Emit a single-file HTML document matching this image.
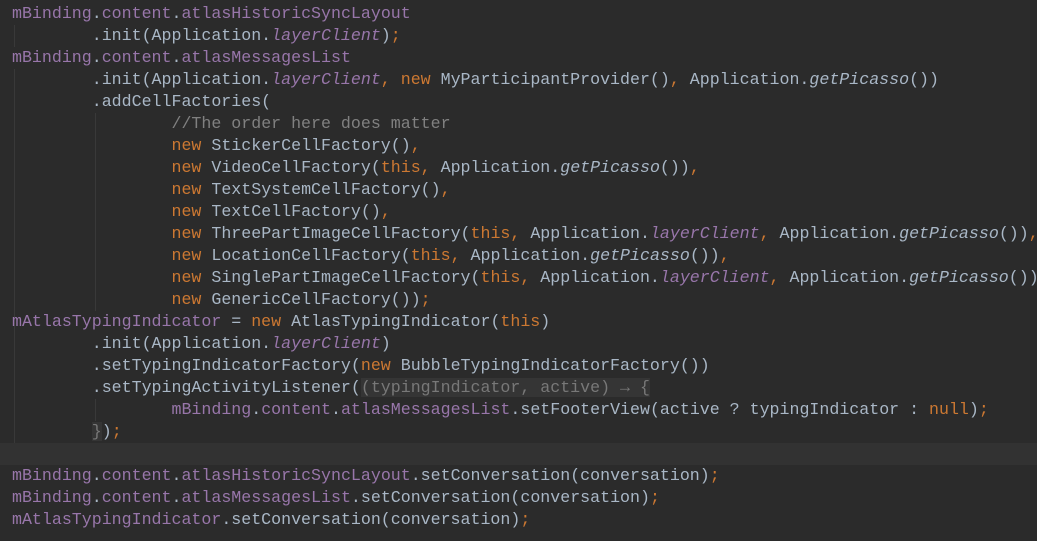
<!DOCTYPE html>
<html><head><meta charset="utf-8"><style>
html,body{margin:0;padding:0;background:#2b2b2b;width:1037px;height:541px;overflow:hidden}
#c{position:absolute;left:12px;top:3px;font-family:"Liberation Mono",monospace;font-size:16.63px;color:#a9b7c6;white-space:pre;line-height:22px}
.f{color:#9876aa}.k{color:#cc7832}.i{font-style:italic;color:#9876aa}.m{font-style:italic}.c{color:#808080}
.p{color:#787878;background:#353535}
#hl{position:absolute;left:0;top:443px;width:1037px;height:22px;background:#323232}
.g{position:absolute;width:1px;background:#393939}
</style></head><body>
<div id="hl"></div>
<div class="g" style="left:14px;top:25px;height:22px"></div>
<div class="g" style="left:14px;top:69px;height:264px"></div>
<div class="g" style="left:95px;top:113px;height:198px"></div>
<div class="g" style="left:14px;top:333px;height:110px"></div>
<div class="g" style="left:95px;top:399px;height:22px"></div>
<div id="c"><span class="f">mBinding</span>.<span class="f">content</span>.<span class="f">atlasHistoricSyncLayout</span>
        .init(Application.<span class="i">layerClient</span>)<span class="k">;</span>
<span class="f">mBinding</span>.<span class="f">content</span>.<span class="f">atlasMessagesList</span>
        .init(Application.<span class="i">layerClient</span><span class="k">, new </span>MyParticipantProvider()<span class="k">, </span>Application.<span class="m">getPicasso</span>())
        .addCellFactories(
                <span class="c">//The order here does matter</span>
                <span class="k">new </span>StickerCellFactory()<span class="k">,</span>
                <span class="k">new </span>VideoCellFactory(<span class="k">this, </span>Application.<span class="m">getPicasso</span>())<span class="k">,</span>
                <span class="k">new </span>TextSystemCellFactory()<span class="k">,</span>
                <span class="k">new </span>TextCellFactory()<span class="k">,</span>
                <span class="k">new </span>ThreePartImageCellFactory(<span class="k">this, </span>Application.<span class="i">layerClient</span><span class="k">, </span>Application.<span class="m">getPicasso</span>())<span class="k">,</span>
                <span class="k">new </span>LocationCellFactory(<span class="k">this, </span>Application.<span class="m">getPicasso</span>())<span class="k">,</span>
                <span class="k">new </span>SinglePartImageCellFactory(<span class="k">this, </span>Application.<span class="i">layerClient</span><span class="k">, </span>Application.<span class="m">getPicasso</span>())<span class="k">,</span>
                <span class="k">new </span>GenericCellFactory())<span class="k">;</span>
<span class="f">mAtlasTypingIndicator</span> = <span class="k">new </span>AtlasTypingIndicator(<span class="k">this</span>)
        .init(Application.<span class="i">layerClient</span>)
        .setTypingIndicatorFactory(<span class="k">new </span>BubbleTypingIndicatorFactory())
        .setTypingActivityListener(<span class="p">(typingIndicator, active) → {</span>
                <span class="f">mBinding</span>.<span class="f">content</span>.<span class="f">atlasMessagesList</span>.setFooterView(active ? typingIndicator : <span class="k">null</span>)<span class="k">;</span>
        <span class="p">}</span>)<span class="k">;</span>

<span class="f">mBinding</span>.<span class="f">content</span>.<span class="f">atlasHistoricSyncLayout</span>.setConversation(conversation)<span class="k">;</span>
<span class="f">mBinding</span>.<span class="f">content</span>.<span class="f">atlasMessagesList</span>.setConversation(conversation)<span class="k">;</span>
<span class="f">mAtlasTypingIndicator</span>.setConversation(conversation)<span class="k">;</span></div>
</body></html>
